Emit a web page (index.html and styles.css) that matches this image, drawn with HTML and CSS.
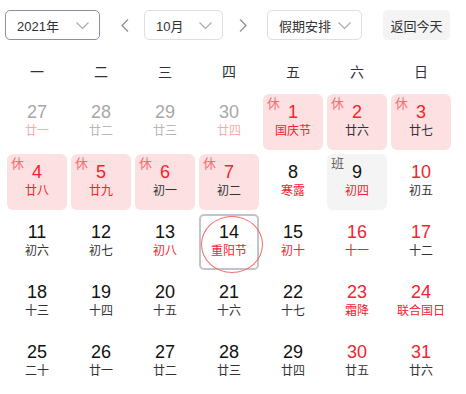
FILE: index.html
```html
<!DOCTYPE html>
<html lang="zh-CN">
<head>
<meta charset="utf-8">
<title>日历</title>
<link rel="stylesheet" href="styles.css">
</head>
<body>
<div class="calendar">
  <div class="toolbar">
    <div class="select select-year active"><span>2021年</span><svg class="chev" width="13" height="7" viewBox="0 0 13 7"><path d="M0.5 0.5 L6.5 6.5 L12.5 0.5"/></svg></div>
    <button class="arrow arrow-prev"><svg width="8" height="13" viewBox="0 0 8 13"><path d="M7 0.5 L1 6.5 L7 12.5"/></svg></button>
    <div class="select select-month"><span>10月</span><svg class="chev" width="13" height="7" viewBox="0 0 13 7"><path d="M0.5 0.5 L6.5 6.5 L12.5 0.5"/></svg></div>
    <button class="arrow arrow-next"><svg width="8" height="13" viewBox="0 0 8 13"><path d="M1 0.5 L7 6.5 L1 12.5"/></svg></button>
    <div class="select select-holiday"><span>假期安排</span><svg class="chev" width="13" height="7" viewBox="0 0 13 7"><path d="M0.5 0.5 L6.5 6.5 L12.5 0.5"/></svg></div>
    <button class="today-btn">返回今天</button>
  </div>

  <div class="weekdays">
    <div>一</div><div>二</div><div>三</div><div>四</div><div>五</div><div>六</div><div>日</div>
  </div>

  <div class="grid">
    <div class="cell other"><span class="num">27</span><span class="lunar pink">廿一</span></div>
    <div class="cell other"><span class="num">28</span><span class="lunar">廿二</span></div>
    <div class="cell other"><span class="num">29</span><span class="lunar">廿三</span></div>
    <div class="cell other"><span class="num">30</span><span class="lunar pink">廿四</span></div>
    <div class="cell rest"><i class="tag">休</i><span class="num red">1</span><span class="lunar red">国庆节</span></div>
    <div class="cell rest"><i class="tag">休</i><span class="num red">2</span><span class="lunar">廿六</span></div>
    <div class="cell rest"><i class="tag">休</i><span class="num red">3</span><span class="lunar">廿七</span></div>

    <div class="cell rest"><i class="tag">休</i><span class="num red">4</span><span class="lunar red">廿八</span></div>
    <div class="cell rest"><i class="tag">休</i><span class="num red">5</span><span class="lunar red">廿九</span></div>
    <div class="cell rest"><i class="tag">休</i><span class="num red">6</span><span class="lunar">初一</span></div>
    <div class="cell rest"><i class="tag">休</i><span class="num red">7</span><span class="lunar">初二</span></div>
    <div class="cell"><span class="num">8</span><span class="lunar red">寒露</span></div>
    <div class="cell work"><i class="tag">班</i><span class="num">9</span><span class="lunar red">初四</span></div>
    <div class="cell"><span class="num red">10</span><span class="lunar">初五</span></div>

    <div class="cell"><span class="num">11</span><span class="lunar">初六</span></div>
    <div class="cell"><span class="num">12</span><span class="lunar">初七</span></div>
    <div class="cell"><span class="num">13</span><span class="lunar red">初八</span></div>
    <div class="cell today"><span class="num">14</span><span class="lunar red">重阳节</span><i class="ring"></i></div>
    <div class="cell"><span class="num">15</span><span class="lunar red">初十</span></div>
    <div class="cell"><span class="num red">16</span><span class="lunar red">十一</span></div>
    <div class="cell"><span class="num red">17</span><span class="lunar">十二</span></div>

    <div class="cell"><span class="num">18</span><span class="lunar">十三</span></div>
    <div class="cell"><span class="num">19</span><span class="lunar">十四</span></div>
    <div class="cell"><span class="num">20</span><span class="lunar">十五</span></div>
    <div class="cell"><span class="num">21</span><span class="lunar">十六</span></div>
    <div class="cell"><span class="num">22</span><span class="lunar">十七</span></div>
    <div class="cell"><span class="num red">23</span><span class="lunar red">霜降</span></div>
    <div class="cell"><span class="num red">24</span><span class="lunar red">联合国日</span></div>

    <div class="cell"><span class="num">25</span><span class="lunar">二十</span></div>
    <div class="cell"><span class="num">26</span><span class="lunar">廿一</span></div>
    <div class="cell"><span class="num">27</span><span class="lunar">廿二</span></div>
    <div class="cell"><span class="num">28</span><span class="lunar">廿三</span></div>
    <div class="cell"><span class="num">29</span><span class="lunar">廿四</span></div>
    <div class="cell"><span class="num red">30</span><span class="lunar">廿五</span></div>
    <div class="cell"><span class="num red">31</span><span class="lunar">廿六</span></div>
  </div>
</div>
</body>
</html>
```

FILE: styles.css
```css
* { box-sizing: border-box; }
html, body { margin: 0; padding: 0; background: #fff; }
body {
  font-family: "Liberation Sans", "Noto Sans CJK SC", sans-serif;
  color: #303133;
}
.calendar {
  width: 448px;
  margin: 0 0 0 5px;
  padding-top: 10px;
}
.toolbar {
  display: flex;
  align-items: center;
  height: 30px;
}
.select {
  height: 30px;
  border: 1px solid #dcdfe6;
  border-radius: 5px;
  display: flex;
  align-items: center;
  justify-content: space-between;
  padding: 0 10px 0 11px;
  font-size: 13px;
  color: #303133;
}
.select.active { border-color: #8e8e9c; }
.chev path { fill: none; stroke: #a8abb2; stroke-width: 1.2; }
.select-year { width: 95px; }
.select-month { width: 79px; margin-left: 9px; }
.select-holiday { width: 95px; margin-left: 14px; }
.arrow {
  width: 20px;
  height: 30px;
  padding: 0;
  border: 0;
  background: transparent;
  display: flex;
  align-items: center;
  justify-content: center;
}
.arrow path { fill: none; stroke: #909399; stroke-width: 1.4; }
.arrow-prev { margin-left: 15px; }
.arrow-next { margin-left: 10px; }
.today-btn {
  margin-left: 21px;
  width: 67px;
  height: 30px;
  border: 0;
  border-radius: 5px;
  background: #f4f4f5;
  font-family: "Liberation Sans", "Noto Sans CJK SC", sans-serif;
  font-size: 13px;
  color: #303133;
  padding: 0;
}
.weekdays {
  display: grid;
  grid-template-columns: repeat(7, 64px);
  margin-top: 12px;
  height: 40px;
  line-height: 40px;
  text-align: center;
  font-size: 14px;
  color: #303133;
}
.grid {
  display: grid;
  grid-template-columns: repeat(7, 64px);
  grid-auto-rows: 60px;
}
.cell {
  position: relative;
  margin: 2px;
  border: 2px solid transparent;
  border-radius: 6px;
  padding-top: 6px;
  display: flex;
  flex-direction: column;
  align-items: center;
}
.num {
  font-size: 18px;
  line-height: 20px;
  color: #111;
}
.lunar {
  font-size: 12px;
  line-height: 18px;
  color: #333;
  white-space: nowrap;
}
.red { color: #f5222d; }
.other .num { color: #a8a8a8; }
.other .lunar { color: #b8b8b8; }
.other .lunar.pink { color: #ffaaaa; }
.rest { background: #fde0e1; }
.work { background: #f4f4f5; }
.tag {
  position: absolute;
  left: 2px;
  top: 1px;
  font-style: normal;
  font-size: 13px;
  line-height: 14px;
  color: #f56c6c;
}
.work .tag { color: #666; }
.today {
  border-color: #c0c4cc;
  border-radius: 5px;
}
.ring {
  position: absolute;
  left: 0;
  top: 0;
  width: 62px;
  height: 57px;
  border: 1px solid #f56c6c;
  border-radius: 50%;
}
```
